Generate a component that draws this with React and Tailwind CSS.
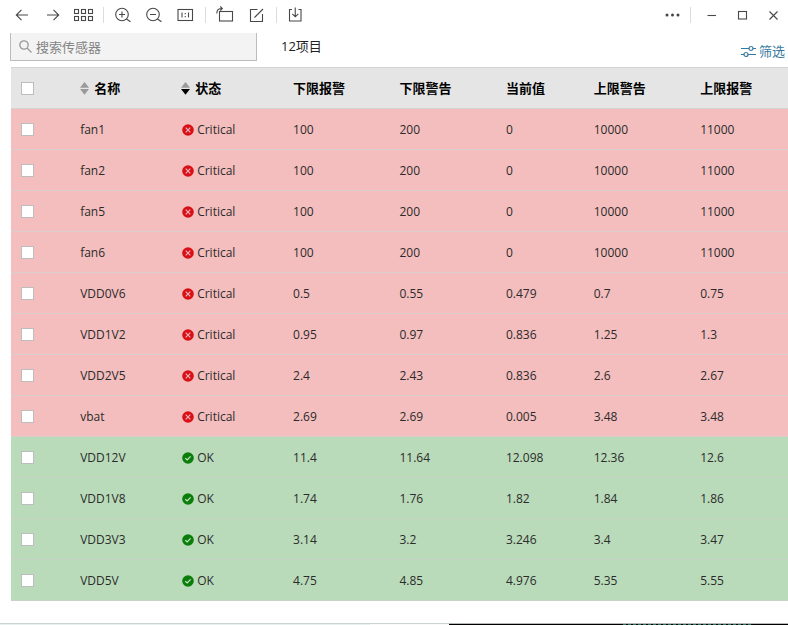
import React from "react";

const columns = ["下限报警", "下限警告", "当前值", "上限警告", "上限报警"];

const sensors = [
  { name: "fan1", ok: false, values: ["100", "200", "0", "10000", "11000"] },
  { name: "fan2", ok: false, values: ["100", "200", "0", "10000", "11000"] },
  { name: "fan5", ok: false, values: ["100", "200", "0", "10000", "11000"] },
  { name: "fan6", ok: false, values: ["100", "200", "0", "10000", "11000"] },
  { name: "VDD0V6", ok: false, values: ["0.5", "0.55", "0.479", "0.7", "0.75"] },
  { name: "VDD1V2", ok: false, values: ["0.95", "0.97", "0.836", "1.25", "1.3"] },
  { name: "VDD2V5", ok: false, values: ["2.4", "2.43", "0.836", "2.6", "2.67"] },
  { name: "vbat", ok: false, values: ["2.69", "2.69", "0.005", "3.48", "3.48"] },
  { name: "VDD12V", ok: true, values: ["11.4", "11.64", "12.098", "12.36", "12.6"] },
  { name: "VDD1V8", ok: true, values: ["1.74", "1.76", "1.82", "1.84", "1.86"] },
  { name: "VDD3V3", ok: true, values: ["3.14", "3.2", "3.246", "3.4", "3.47"] },
  { name: "VDD5V", ok: true, values: ["4.75", "4.85", "4.976", "5.35", "5.55"] },
];

function Glyph({ children }) {
  return (
    <svg width="20" height="20" viewBox="0 0 20 20" fill="none" stroke="#484848" strokeWidth="1.1" aria-hidden="true">
      {children}
    </svg>
  );
}

function ToolButton({ label, children }) {
  return (
    <button type="button" aria-label={label} className="flex h-[30px] w-[31px] shrink-0 items-center justify-center">
      <Glyph>{children}</Glyph>
    </button>
  );
}

function Divider() {
  return <span className="mx-1 h-4 w-px shrink-0 bg-[#dcdcdc]" />;
}

function Toolbar() {
  return (
    <header className="flex h-[30px] items-center justify-between pl-1.5">
      <div className="flex items-center">
        <ToolButton label="后退">
          <path d="M16 10H4.500M9.500 4.800L4.300 10l5.200 5.200" />
        </ToolButton>
        <ToolButton label="前进">
          <path d="M4 10h11.500M10.500 4.800l5.200 5.200-5.200 5.200" />
        </ToolButton>
        <ToolButton label="缩略图">
          {[0.5, 7.5, 14.5].map((x) => (
            <g key={x}>
              <rect x={x} y="4.500" width="4" height="4" />
              <rect x={x} y="11.500" width="4" height="4" />
            </g>
          ))}
        </ToolButton>
        <Divider />
        <ToolButton label="放大">
          <circle cx="8" cy="9.500" r="6.300" />
          <path d="M12.500 14l4 2.800M5 9.500h6M8 6.500v6" />
        </ToolButton>
        <ToolButton label="缩小">
          <circle cx="8" cy="9.500" r="6.300" />
          <path d="M12.500 14l4 2.800M5 9.500h6" />
        </ToolButton>
        <ToolButton label="原始大小">
          <rect x="2" y="4.500" width="14.500" height="11" />
          <path d="M6 7.500v5M12.500 7.500v5M9.250 8v1.200M9.250 11v1.200" />
        </ToolButton>
        <Divider />
        <ToolButton label="旋转">
          <rect x="3.500" y="6.500" width="13" height="9.500" />
          <path d="M0.800 8.500C0.800 5 2.500 3.500 6 3.500M4.300 1.500l2 2-2 2" />
        </ToolButton>
        <ToolButton label="编辑">
          <path d="M10.500 4.500H3.500v12h12V9M7.500 12.500l8.500-8.500" />
        </ToolButton>
        <Divider />
        <ToolButton label="保存">
          <path d="M5 4.500H2.500v11.500h11.500V4.500H11.500M8.250 2.500v9M5.300 8.800l3 3 3-3" />
        </ToolButton>
      </div>
      <div className="flex items-center">
        <ToolButton label="更多">
          <g fill="#444" stroke="none">
            <circle cx="6" cy="10" r="1.500" />
            <circle cx="11.500" cy="10" r="1.500" />
            <circle cx="17" cy="10" r="1.500" />
          </g>
        </ToolButton>
        <Divider />
        <ToolButton label="最小化">
          <path d="M6.500 10.500h8.500" />
        </ToolButton>
        <ToolButton label="最大化">
          <rect x="6.500" y="6.500" width="8" height="7.500" />
        </ToolButton>
        <ToolButton label="关闭">
          <path d="M6.500 6.500l8 8M14.500 6.500l-8 8" />
        </ToolButton>
      </div>
    </header>
  );
}

function SortIcon({ descending }) {
  return (
    <svg width="9" height="13" viewBox="0 0 9 13" aria-hidden="true">
      <path d="M4.500 0L9 5.800H0z" fill="#9a9a9a" />
      <path d="M0 7h9L4.500 12.800z" fill={descending ? "#000" : "#9a9a9a"} />
    </svg>
  );
}

function StatusIcon({ ok }) {
  return (
    <svg width="12" height="12" viewBox="0 0 12 12" fill="none" aria-hidden="true">
      <circle cx="6" cy="6" r="5.800" fill={ok ? "#0b7d0b" : "#d80f16"} />
      {ok ? (
        <path d="M3.300 6.200l1.900 1.700 3.400-3.500" stroke="#c5e6c5" strokeWidth="1.200" />
      ) : (
        <path d="M3.700 3.700l4.600 4.600M8.300 3.700L3.700 8.300" stroke="#f9b9bc" strokeWidth="1.100" />
      )}
    </svg>
  );
}

function CheckBox({ label }) {
  return (
    <input
      type="checkbox"
      aria-label={label}
      className="ml-2.5 block size-[13px] appearance-none border border-[#bdbdbd] bg-white checked:bg-[#3a7ca5]"
    />
  );
}

function SensorTable() {
  return (
    <table className="w-full table-fixed border-collapse text-left">
      <colgroup>
        <col className="w-[8.900%]" />
        <col className="w-[13%]" />
        <col className="w-[14.400%]" />
        <col className="w-[13.700%]" />
        <col className="w-[13.700%]" />
        <col className="w-[11.300%]" />
        <col className="w-[13.700%]" />
        <col />
      </colgroup>
      <thead>
        <tr className="h-[41px] border-y border-[#d3d3d3] bg-[#e5e5e5] text-[13px] leading-5 text-black">
          <th className="p-0">
            <CheckBox label="全选" />
          </th>
          <th className="p-0 font-bold">
            <button type="button" className="flex items-center gap-[5px]">
              <SortIcon />
              名称
            </button>
          </th>
          <th className="p-0 font-bold">
            <button type="button" className="flex items-center gap-[5px]">
              <SortIcon descending />
              状态
            </button>
          </th>
          {columns.map((c) => (
            <th key={c} className="p-0 font-bold">
              {c}
            </th>
          ))}
        </tr>
      </thead>
      <tbody className="text-xs text-[#2b2b2b]">
        {sensors.map((s) => (
          <tr
            key={s.name}
            className={
              s.ok
                ? "h-[41px] border-b border-[#c8d3c8] bg-[#badbba]"
                : "h-[41px] border-b border-[#dacdcd] bg-[#f4bebe]"
            }
          >
            <td className="p-0">
              <CheckBox label={s.name} />
            </td>
            <td className="p-0 pt-0.5">{s.name}</td>
            <td className="p-0 pt-0.5 pl-px">
              <span className="flex items-center gap-[3px]">
                <StatusIcon ok={s.ok} />
                {s.ok ? "OK" : "Critical"}
              </span>
            </td>
            {s.values.map((v, i) => (
              <td key={i} className="p-0 pt-0.5">
                {v}
              </td>
            ))}
          </tr>
        ))}
      </tbody>
    </table>
  );
}

export default function App() {
  return (
    <div className="flex min-h-screen flex-col bg-white font-['Open_Sans','Noto_Sans_CJK_SC',sans-serif]">
      <Toolbar />
      <div className="flex items-start justify-between pt-[3px] pr-[3px] pb-1.5 pl-2.5">
        <div className="flex items-start gap-6">
          <label className="flex h-7 w-[247px] items-center gap-1 border border-t-0 border-[#bcbcbc] bg-[#f3f3f3] pl-2">
            <svg width="13" height="13" viewBox="0 0 13 13" fill="none" stroke="#999" strokeWidth="1.300" aria-hidden="true">
              <circle cx="5" cy="5" r="4.200" />
              <path d="M8 8l4.500 4.500" />
            </svg>
            <input
              type="text"
              aria-label="搜索传感器"
              placeholder="搜索传感器"
              className="min-w-0 flex-1 bg-transparent text-[13px] leading-5 outline-none placeholder:text-[#858585]"
            />
          </label>
          <span className="pt-[3px] text-[13px] leading-5 text-[#222]">12项目</span>
        </div>
        <button type="button" className="flex items-center gap-[3px] pt-2 text-[13px] leading-5 text-[#35799f]">
          <svg width="15" height="13" viewBox="0 0 15 13" fill="none" stroke="#35799f" strokeWidth="1.200" aria-hidden="true">
            <path d="M0 3.500h8M12 3.500h3M0 9.500h3M7 9.500h8" />
            <circle cx="10" cy="3.500" r="2" />
            <circle cx="5" cy="9.500" r="2" />
          </svg>
          筛选
        </button>
      </div>
      <main className="pl-[11px]">
        <SensorTable />
      </main>
      <footer className="mt-auto flex h-0.5">
        <div className="w-[47%] border-t border-[#c9d3d1] bg-[#e7f0ee]" />
        <div className="w-[10%] border-t border-[#c9d3d1] bg-[#fafafa]" />
        <div className="flex flex-1 items-end border-t border-[#b5bab9] bg-black pl-[22%]">
          <div className="w-32 border-b border-dashed border-[#2c7460]" />
        </div>
      </footer>
    </div>
  );
}
